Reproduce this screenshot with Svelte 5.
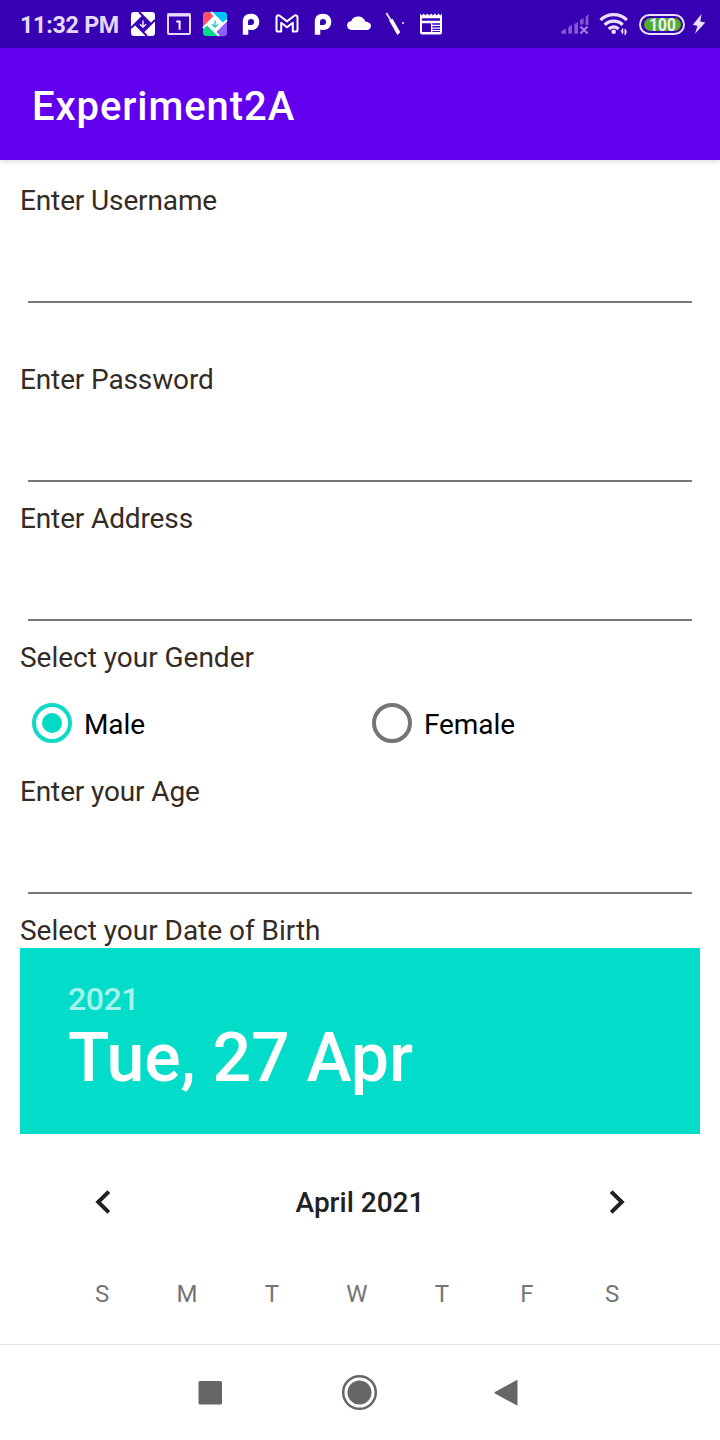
<script>
  const days = ['S', 'M', 'T', 'W', 'T', 'F', 'S'];
</script>

{#snippet pinwheel(colors, cut, arrow)}
  <svg width="26" height="26" viewBox="0 0 26 26">
    <path d="M4 1h6l3 4-8 8-4 4V4a3 3 0 0 1 3-3z" fill={colors[0]} />
    <path d="M9 1h13a3 3 0 0 1 3 3v6l-4 3-8-8z" fill={colors[1]} />
    <path d="M25 9v13a3 3 0 0 1-3 3h-6l-3-4 8-8z" fill={colors[2]} />
    <path d="M17 25H4a3 3 0 0 1-3-3v-6l4-3 8 8z" fill={colors[3]} />
    <path d="M13 5l8 8-8 8-8-8z" fill={cut} />
    <path d="M9 1L21 13M25 9L13 21M17 25L5 13M1 17L13 5" fill="none" stroke={cut} stroke-width="1.800" />
    <path d="M13 9.500v6.500M10 13.200l3 3 3-3" fill="none" stroke={arrow} stroke-width="1.300" />
  </svg>
{/snippet}

{#snippet letterP()}
  <svg width="26" height="26" viewBox="0 0 26 26">
    <path fill="#fff" fill-rule="evenodd" d="M4.800 23.800V10.500C4.800 5.500 8 2.800 13 2.800s8.300 3.300 8.300 8c0 5-3.300 8.200-7.800 8.200-1.200 0-2.200-.2-3.200-.6v5.400zM13 7.900a3 3 0 0 0-3 3.100v3H13a3.050 3.050 0 0 0 0-6.100z" />
  </svg>
{/snippet}

{#snippet field(label)}
  <label class="field">
    <span class="label tight">{label}</span>
    <input type="text" />
  </label>
{/snippet}

<div class="screen">
  <header class="status">
    <span class="time">11:32 PM</span>
    <div class="notices">
      {@render pinwheel(['#fff', '#fff', '#fff', '#fff'], '#3700b3', '#fff')}
      <svg width="26" height="26" viewBox="0 0 26 26">
        <rect x="2" y="3.300" width="22" height="19.700" rx="1" fill="none" stroke="#e4d9fa" stroke-width="2" />
        <path d="M1.500 2.300h23v3.200h-23z" fill="#e4d9fa" />
        <path d="M10.300 10.400h3.300v8.400" fill="none" stroke="#fff" stroke-width="2" />
      </svg>
      {@render pinwheel(['#ff5067', '#00c3ff', '#8b61fa', '#00db8b'], '#fff', '#1bc6c2')}
      {@render letterP()}
      <svg width="26" height="26" viewBox="0 0 26 26">
        <path d="M6.200 20.600H3.800a1.300 1.300 0 0 1-1.300-1.300V6.200c0-1.600 1.900-2.400 3.200-1.400L13 10.400l7.300-5.600c1.300-1 3.200-.2 3.200 1.400v13.100a1.300 1.300 0 0 1-1.300 1.300h-3.400v-8.800L13 16.300l-5.800-4.500v8.800z" fill="none" stroke="#fff" stroke-width="2" stroke-linejoin="round" />
      </svg>
      {@render letterP()}
      <svg width="26" height="26" viewBox="0 0 26 26">
        <path d="M6.500 19C3 19 1 17.200 1 14.500c0-2.600 2-4.300 4.300-4.500C6.300 7.300 8.800 5.600 12 5.600c3.700 0 6.500 2 7.400 5.200 3.200 0 5.600 1.800 5.600 4.300 0 2.400-1.800 3.900-4.500 3.900z" fill="#fff" />
      </svg>
      <svg width="26" height="26" viewBox="0 0 26 26">
        <path d="M4.300 2l4.500 7" stroke="#e8ddfa" stroke-width="1.900" fill="none" />
        <path d="M7 9.300l3.500-1.500 7.800 13.500-3 2.700z" fill="#fff" />
        <rect x="20" y="11" width="2" height="2" fill="#cbb9ee" />
      </svg>
      <svg width="26" height="26" viewBox="0 0 26 26">
        <path fill="#fff" fill-rule="evenodd" d="M2 2.500l1.800 2 1.900-2L7.500 4.500l1.900-2 1.800 2 1.900-2 1.800 2 1.900-2 1.800 2 1.900-2 1.800 2L24 2.500V21.500a2 2 0 0 1-2 2H4a2 2 0 0 1-2-2zM4 7.300v2.500h18V7.300zM4 12.200V21h9v-8.800zM14.300 12.200v1.600H22v-1.600zM14.300 15v1.600H22v-1.600zM14.300 17.700v1.300H22v-1.300zM14.300 20v1H22v-1z" />
      </svg>
    </div>
    <div class="system">
      <svg width="30" height="28" viewBox="0 0 30 28">
        <g fill="#8058d0">
          <path d="M1.300 21L6 18.500V23.700H1.300zM8.300 17l3.700-2V23.700H8.300zM14.300 14l3.700-2V23.700h-3.700zM20 10l3.500-2v6.500H20zM25.500 7l3-3v11h-3z" />
        </g>
        <path d="M20.500 16.500l7 7M27.500 16.500l-7 7" stroke="#a17edf" stroke-width="2.200" />
      </svg>
      <svg width="34" height="28" viewBox="0 0 34 28">
        <g fill="none" stroke="#eadfff" stroke-width="3.200">
          <path d="M2.500 10a19 19 0 0 1 26.400 0" />
          <path d="M6.700 14.800a12.700 12.700 0 0 1 18 0" />
          <path d="M10.800 19a6.900 6.900 0 0 1 9.800 0" />
        </g>
        <circle cx="15.700" cy="21.700" r="2.300" fill="#eadfff" />
        <path d="M24.500 18.500v5.200M27.300 19v6" stroke="#eadfff" stroke-width="1.500" />
        <path d="M22.300 20.500l2.200 3v-3zM29.500 22.500l-2.200-3v3z" fill="#eadfff" />
      </svg>
      <div class="battery"><span class="charge"><span class="level">100</span></span></div>
      <svg class="bolt" width="14" height="22" viewBox="0 0 14 22">
        <path d="M9.500 1L.8 11.800l4.700 1.200L3 20.800 13.300 9.500 8.300 8.400z" fill="#eadfff" />
      </svg>
    </div>
  </header>

  <div class="appbar"><h1>Experiment2A</h1></div>

  <main>
    <div class="spaced">{@render field('Enter Username')}</div>
    {@render field('Enter Password')}
    {@render field('Enter Address')}
    <div class="gender">
      <span class="label">Select your Gender</span>
      <div class="options">
        <div class="option"><span class="radio on"></span><span class="name">Male</span></div>
        <div class="option"><span class="radio"></span><span class="name">Female</span></div>
      </div>
    </div>
    {@render field('Enter your Age')}
    <span class="label">Select your Date of Birth</span>
    <section class="picker">
      <div class="chosen">
        <div class="year">2021</div>
        <div class="date">Tue, 27 Apr</div>
      </div>
      <div class="month">
        <svg width="18" height="26" viewBox="0 0 18 26"><path d="M14.800 2.600L4.200 13l10.600 10.400" /></svg>
        <span>April 2021</span>
        <svg width="18" height="26" viewBox="0 0 18 26"><path d="M3.200 2.600L13.800 13 3.200 23.400" /></svg>
      </div>
      <div class="week">
        {#each days as day}<span>{day}</span>{/each}
      </div>
    </section>
  </main>

  <nav>
    <svg width="40" height="40" viewBox="0 0 40 40"><rect x="8.500" y="8" width="23.500" height="23.500" rx="1.500" fill="#666" /></svg>
    <svg width="40" height="40" viewBox="0 0 40 40">
      <circle cx="19.500" cy="19.500" r="16.300" fill="none" stroke="#666" stroke-width="2.500" />
      <circle cx="19.500" cy="19.500" r="12" fill="#666" />
    </svg>
    <svg width="40" height="40" viewBox="0 0 40 40"><path d="M9 19L30.500 7.200q1-.5 1 .6v24q0 1-1 .5L9 20.400q-1-.7 0-1.400z" fill="#666" /></svg>
  </nav>
</div>

<style>
  :global(body) { background: #fff; }
  .screen {
    width: 720px;
    height: 1440px;
    display: flex;
    flex-direction: column;
    overflow: hidden;
    background: #fff;
    font-family: Roboto, sans-serif;
  }
  svg { display: block; flex: none; }
  .status {
    height: 48px;
    flex: none;
    display: flex;
    align-items: center;
    padding: 0 14px 0 20px;
    box-sizing: border-box;
    background: #3700b3;
  }
  .time {
    width: 110px;
    flex: none;
    white-space: nowrap;
    font-size: 23.300px;
    font-weight: 700;
    letter-spacing: -.28px;
    line-height: 28px;
    padding-top: 2px;
    box-sizing: border-box;
    color: #e4d9fa;
  }
  .notices { display: flex; gap: 10px; }
  .system { margin-left: auto; display: flex; align-items: center; }
  .system svg:nth-child(2) { margin: 0 7px 0 8px; }
  .battery {
    width: 46px;
    height: 21px;
    box-sizing: border-box;
    border: 2px solid #eadfff;
    border-radius: 11px;
    padding: 2px 2.500px;
  }
  .charge {
    display: block;
    height: 13px;
    border-radius: 7px;
    background: #50ae2b;
    text-align: center;
  }
  .level {
    display: block;
    color: #f5eeff;
    font-size: 17.500px;
    line-height: 14px;
    font-weight: 700;
    transform: scaleX(.88);
  }
  .bolt { margin-left: 7px; }
  .appbar {
    height: 112px;
    flex: none;
    display: flex;
    align-items: center;
    padding: 4px 32px 0;
    box-sizing: border-box;
    background: #6200ee;
    box-shadow: 0 1px 6px rgba(0, 0, 0, .16);
  }
  h1 {
    margin: 0;
    color: #fff;
    font-size: 40px;
    font-weight: 500;
    letter-spacing: .92px;
  }
  main { padding: 20px 20px 0; }
  .label {
    display: block;
    height: 38px;
    line-height: 42px;
    font-size: 28px;
    letter-spacing: -.02px;
    color: #352b25;
  }
  .tight { letter-spacing: -.13px; }
  .field { display: block; height: 139px; }
  .spaced { height: 179px; }
  .field input {
    display: block;
    width: 664px;
    height: 85px;
    margin: 0 8px;
    padding: 0;
    border: 0;
    border-bottom: 2px solid #777;
    box-sizing: border-box;
    background: transparent;
    font: 28px Roboto, sans-serif;
    outline: 0;
  }
  .gender { height: 134px; }
  .options {
    height: 96px;
    display: grid;
    grid-template-columns: 1fr 1fr;
  }
  .option {
    height: 96px;
    display: flex;
    align-items: center;
    gap: 12px;
    padding: 0 12px;
    box-sizing: border-box;
    font-size: 28px;
    color: #000;
  }
  .name { padding-top: 2px; letter-spacing: -.1px; }
  .radio {
    width: 40px;
    height: 40px;
    box-sizing: border-box;
    border: 4px solid #757575;
    border-radius: 50%;
    display: grid;
    place-items: center;
  }
  .radio.on { border-color: #12d8c6; }
  .radio.on::after {
    content: '';
    width: 20px;
    height: 20px;
    border-radius: 50%;
    background: #03dac5;
  }
  .chosen {
    height: 186px;
    padding: 32px 48px 0;
    box-sizing: border-box;
    background: #03dcc8;
    font-weight: 500;
  }
  .year { font-size: 32px; line-height: 38px; color: #a6f4ec; letter-spacing: -.4px; }
  .date { font-size: 68px; line-height: 80px; color: #fff; white-space: nowrap; letter-spacing: -.1px; }
  .month {
    margin-top: 48px;
    height: 40px;
    padding: 0 74px;
    display: flex;
    align-items: center;
    justify-content: space-between;
    font-size: 28px;
    font-weight: 500;
    color: #212121;
  }
  .month path { fill: none; stroke: #212121; stroke-width: 4; }
  .week {
    margin: 52px 45.500px 0 39.500px;
    height: 40px;
    display: grid;
    grid-template-columns: repeat(7, 1fr);
    align-items: center;
    text-align: center;
    font-size: 24px;
    color: #757575;
  }
  nav {
    height: 96px;
    margin-top: auto;
    flex: none;
    box-sizing: border-box;
    border-top: 1px solid #e2e2e2;
    display: grid;
    grid-template-columns: 150px 146px 40px;
    align-items: center;
    padding-left: 190px;
  }
</style>
